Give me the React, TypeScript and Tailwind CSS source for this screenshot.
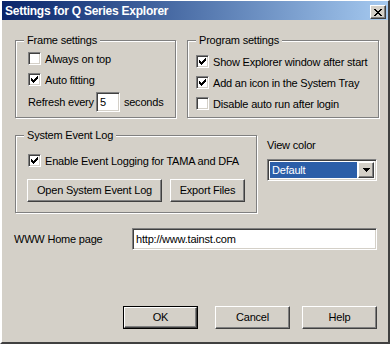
const font = "font-['Liberation_Sans',Arial,sans-serif]";

function CheckMark() {
  const ys = [2, 3, 4, 3, 2, 1, 0];
  return (
    <svg width="7" height="7" viewBox="0 0 7 7" shapeRendering="crispEdges" className="absolute left-[2px] top-[2px]">
      {ys.map((y, i) => (
        <rect key={i} x={i} y={y} width="1" height="3" fill="#000" />
      ))}
    </svg>
  );
}

function Checkbox({ checked }: { checked?: boolean }) {
  return (
    <span className="relative block w-[13px] h-[13px] shrink-0 bg-white border border-t-[#808080] border-l-[#808080] border-r-white border-b-white shadow-[inset_1px_1px_0_#404040,inset_-1px_-1px_0_#d4d0c8]">
      {checked && <CheckMark />}
    </span>
  );
}

function CheckRow({ label, checked }: { label: string; checked?: boolean }) {
  return (
    <div className="flex items-center h-[13px] gap-[4px]">
      <Checkbox checked={checked} />
      <span className="leading-[14px]">{label}</span>
    </div>
  );
}

function Group({ title, className, children }: { title: string; className: string; children: React.ReactNode }) {
  return (
    <div className={`relative shrink-0 border border-[#808080] shadow-[1px_1px_0_#fff,inset_1px_1px_0_#fff] ${className}`}>
      <span className="absolute left-[8px] -top-[8px] px-[3px] bg-[#d4d0c8] leading-[14px] whitespace-nowrap">{title}</span>
      {children}
    </div>
  );
}

function Button({ label, className, isDefault }: { label: string; className: string; isDefault?: boolean }) {
  const inner = (
    <div className="w-full h-full flex items-center justify-center border border-t-white border-l-white border-r-[#404040] border-b-[#404040] shadow-[inset_-1px_-1px_0_#808080]">
      {label}
    </div>
  );
  if (isDefault) {
    return <div className={`shrink-0 border border-black ${className}`}>{inner}</div>;
  }
  return <div className={`shrink-0 ${className}`}>{inner}</div>;
}

function CloseGlyph() {
  const px: [number, number][] = [
    [0, 0], [1, 0], [6, 0], [7, 0],
    [1, 1], [2, 1], [5, 1], [6, 1],
    [2, 2], [3, 2], [4, 2], [5, 2],
    [3, 3], [4, 3],
    [2, 4], [3, 4], [4, 4], [5, 4],
    [1, 5], [2, 5], [5, 5], [6, 5],
    [0, 6], [1, 6], [6, 6], [7, 6],
  ];
  return (
    <svg width="8" height="7" viewBox="0 0 8 7" shapeRendering="crispEdges">
      {px.map(([x, y], i) => (
        <rect key={i} x={x} y={y} width="1" height="1" fill="#000" />
      ))}
    </svg>
  );
}

export default function App() {
  return (
    <div className={`w-[390px] h-[344px] bg-[#d4d0c8] text-black text-[11px] tracking-[-0.2px] flex flex-col border-t border-l-2 border-t-white border-l-white border-r-2 border-b-2 border-r-[#404040] border-b-[#404040] ${font}`}>
      {/* title bar */}
      <div className="h-[19px] shrink-0 flex items-center justify-between pl-[3px] pr-[2px] bg-linear-to-r from-[#0a246a] to-[#a6caf0]">
        <span className="text-white font-bold text-[12px] tracking-[-0.25px] leading-[14px]">Settings for Q Series Explorer</span>
        <div className="w-[16px] h-[14px] self-start mt-[4px] flex items-center justify-center bg-[#d4d0c8] border border-t-white border-l-white border-r-[#404040] border-b-[#404040] shadow-[inset_-1px_-1px_0_#808080]">
          <CloseGlyph />
        </div>
      </div>

      <div className="flex-1 flex flex-col pl-[13px]">
        {/* row 1 */}
        <div className="flex gap-[11px] mt-[20px]">
          <Group title="Frame settings" className="w-[161px] h-[78px]">
            <div className="flex flex-col gap-[8px] pl-[12px] pt-[11px]">
              <CheckRow label="Always on top" />
              <CheckRow label="Auto fitting" checked />
            </div>
            <div className="flex items-center pl-[12px] mt-[6px]">
              <span className="leading-[14px]">Refresh every</span>
              <div className="ml-[2px] w-[24px] h-[20px] bg-white pl-[3px] flex items-center border border-t-[#808080] border-l-[#808080] border-r-white border-b-white shadow-[inset_1px_1px_0_#404040,inset_-1px_-1px_0_#d4d0c8]">
                5
              </div>
              <span className="ml-[4px] leading-[14px]">seconds</span>
            </div>
          </Group>
          <Group title="Program settings" className="w-[192px] h-[78px]">
            <div className="flex flex-col gap-[8px] pl-[8px] pt-[14px]">
              <CheckRow label="Show Explorer window after start" checked />
              <CheckRow label="Add an icon in the System Tray" checked />
              <CheckRow label="Disable auto run after login" />
            </div>
          </Group>
        </div>

        {/* row 2 */}
        <div className="flex mt-[17px]">
          <Group title="System Event Log" className="w-[242px] h-[78px]">
            <div className="pl-[12px] pt-[18px]">
              <CheckRow label="Enable Event Logging for TAMA and DFA" checked />
            </div>
            <div className="flex gap-[8px] pl-[11px] mt-[12px]">
              <Button label="Open System Event Log" className="w-[135px] h-[23px]" />
              <Button label="Export Files" className="w-[75px] h-[23px]" />
            </div>
          </Group>
          <div className="ml-[10px] flex flex-col">
            <span className="mt-[3px] leading-[14px]">View color</span>
            <div className="mt-[7px] w-[110px] h-[22px] flex bg-white border border-t-[#808080] border-l-[#808080] border-r-white border-b-white shadow-[inset_1px_1px_0_#404040,inset_-1px_-1px_0_#d4d0c8] p-[2px]">
              <div className="flex-1 bg-[#2b5ea8] text-white flex items-center pl-[2px] mr-[1px]">Default</div>
              <div className="w-[16px] h-full flex items-center justify-center bg-[#d4d0c8] border border-t-white border-l-white border-r-[#404040] border-b-[#404040] shadow-[inset_-1px_-1px_0_#808080]">
                <svg width="7" height="4" viewBox="0 0 7 4" shapeRendering="crispEdges">
                  <path d="M0 0h7v1h-1v1h-1v1h-1v1h-1v-1h-1v-1h-1v-1h-1z" fill="#000" />
                </svg>
              </div>
            </div>
          </div>
        </div>

        {/* row 3 */}
        <div className="flex items-center mt-[15px] -ml-[1px]">
          <span className="w-[118px] leading-[14px]">WWW Home page</span>
          <div className="w-[245px] h-[22px] bg-white pl-[3px] flex items-center border border-t-[#808080] border-l-[#808080] border-r-white border-b-white shadow-[inset_1px_1px_0_#404040,inset_-1px_-1px_0_#d4d0c8]">
            http://www.tainst.com
          </div>
        </div>

        {/* row 4 */}
        <div className="flex mt-[56px] ml-[108px]">
          <Button label="OK" className="w-[75px] h-[23px]" isDefault />
          <Button label="Cancel" className="w-[75px] h-[23px] ml-[17px]" />
          <Button label="Help" className="w-[75px] h-[23px] ml-[12px]" />
        </div>
      </div>
    </div>
  );
}
